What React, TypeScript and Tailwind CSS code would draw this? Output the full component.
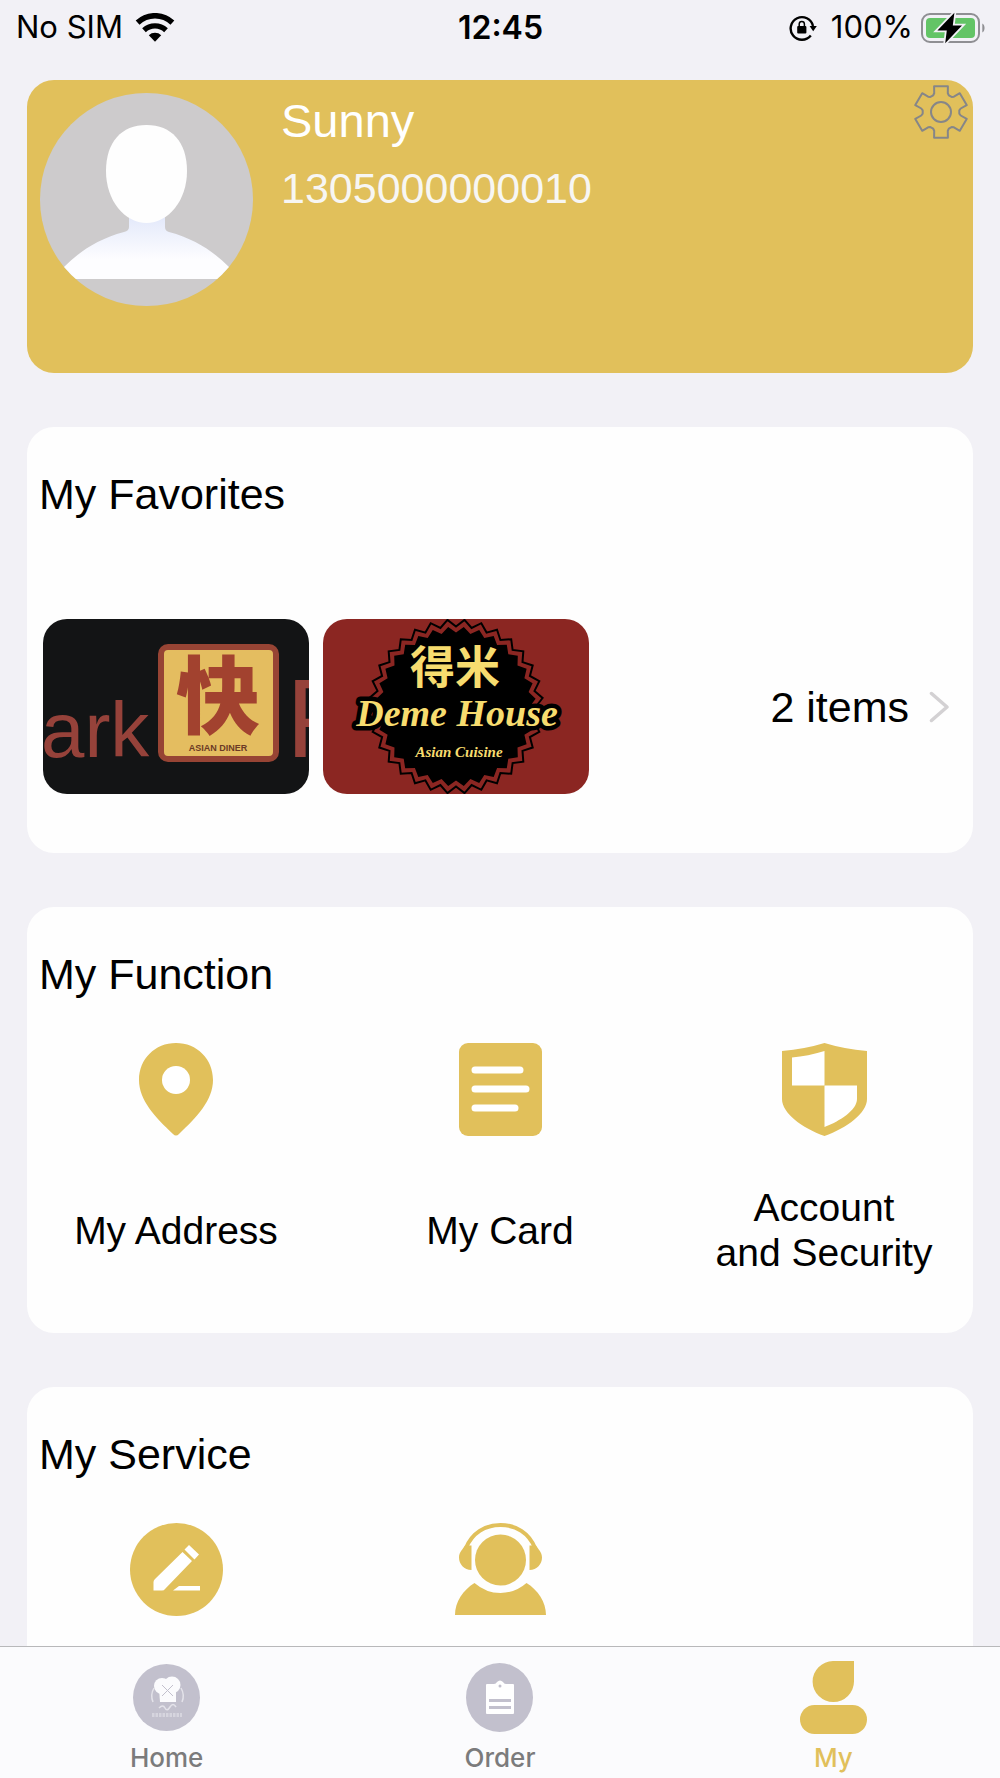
import type { ReactNode } from 'react';

const GOLD = '#e1c05b';

// Points on a circle, repeated once per tooth: [angle offset in degrees, radius]
function ring(cx: number, cy: number, teeth: number, shape: [number, number][]) {
  const points: string[] = [];
  for (let i = 0; i < teeth; i++) {
    for (const [offset, radius] of shape) {
      const angle = (((360 / teeth) * i + offset - 90) * Math.PI) / 180;
      points.push(`${(cx + radius * Math.cos(angle)).toFixed(1)},${(cy + radius * Math.sin(angle)).toFixed(1)}`);
    }
  }
  return points.join(' ');
}

function WifiIcon() {
  return (
    <svg width="40" height="30" viewBox="0 0 40 30" aria-hidden="true">
      <path d="M2.6 9.6a25.5 25.5 0 0 1 34.8 0" fill="none" stroke="#000" strokeWidth="5.6" />
      <path d="M9 17.2a16.2 16.2 0 0 1 22 0" fill="none" stroke="#000" strokeWidth="5.4" />
      <path d="M13.8 22.2a9 9 0 0 1 12.4 0L20 28.8Z" />
    </svg>
  );
}

function RotationLockIcon() {
  return (
    <svg width="28" height="27" viewBox="0 0 28 27" aria-hidden="true">
      <path d="M21.8 21.5a11.3 11.3 0 1 1 2.2-9.5" fill="none" stroke="#000" strokeWidth="2.4" />
      <path d="M20.6 12h7.2l-3.6 5.2Z" />
      <rect x="8.2" y="12" width="9.2" height="7.6" rx="1" />
      <path d="M10.2 12.5V10a2.6 2.6 0 0 1 5.2 0v2.5" fill="none" stroke="#000" strokeWidth="1.5" />
    </svg>
  );
}

function BatteryIcon() {
  return (
    <svg width="64" height="32" viewBox="0 0 64 32" aria-hidden="true">
      <rect x="1" y="2" width="57" height="28" rx="8" fill="none" stroke="#8f8f93" strokeWidth="2" />
      <rect x="5" y="6" width="49" height="20" rx="4" fill="#63c466" />
      <path d="M61.3 11.5c3 1.6 3 7.4 0 9Z" fill="#8f8f93" />
      <path
        d="M33.4.8 16.4 18.4h9.4L24.2 31.2 41 13.6h-9.2Z"
        stroke="#f2f1f6"
        strokeWidth="3.6"
        paintOrder="stroke"
      />
    </svg>
  );
}

function GearIcon() {
  return (
    <svg width="54" height="54" viewBox="0 0 54 54" fill="none" stroke="#868688" strokeWidth="2" strokeLinejoin="round" aria-hidden="true">
      <polygon points={ring(27, 27, 6, [[-20, 20], [-15, 26.6], [15, 26.6], [20, 20], [25, 18.4], [35, 18.4]])} />
      <circle cx="27" cy="27" r="10" />
    </svg>
  );
}

function Avatar() {
  return (
    <svg className="shrink-0" width="213" height="213" viewBox="0 0 213 213" role="img" aria-label="Profile photo">
      <defs>
        <clipPath id="avatar-clip">
          <circle cx="106.5" cy="106.5" r="106.5" />
        </clipPath>
        <linearGradient id="avatar-body" x1="0" y1="0" x2="0" y2="1">
          <stop offset="0" stopColor="#e1e7fa" />
          <stop offset="0.7" stopColor="#fdfdff" />
        </linearGradient>
      </defs>
      <g clipPath="url(#avatar-clip)">
        <rect width="213" height="213" fill="#cdcbcc" />
        <path
          d="M89 120h36v14q0 4 4 5c26 7 44 19 60 35l12 12H12l12-12c16-16 34-28 60-35q5-1 5-5Z"
          fill="url(#avatar-body)"
        />
        <path d="M106.5 32c25 0 40.500 17 40.500 46 0 30-19 52-40.500 52S66 108 66 78c0-29 15.500-46 40.500-46Z" fill="#fefefe" />
      </g>
    </svg>
  );
}

function AsianDinerPhoto() {
  return (
    <svg className="rounded-3xl" width="266" height="175" viewBox="0 0 266 175" role="img" aria-label="Park Asian Diner">
      <rect width="266" height="175" fill="#131415" />
      <g fill="#96423a" fontFamily="'Liberation Sans', sans-serif">
        <text x="-2" y="138" fontSize="78">
          ark
        </text>
        <text x="243" y="138" fontSize="112">
          P
        </text>
      </g>
      <rect x="118" y="28" width="115" height="112" rx="7" fill="#e4bd60" stroke="#974434" strokeWidth="6" />
      <text x="133" y="108" fill="#a2422f" fontFamily="'Noto Sans CJK SC', sans-serif" fontSize="84" fontWeight="900">
        快
      </text>
      <text x="175" y="132" textAnchor="middle" fill="#6b3a26" fontFamily="'Liberation Sans', sans-serif" fontSize="9" fontWeight="700">
        ASIAN DINER
      </text>
    </svg>
  );
}

function DemeHouseLogo() {
  return (
    <svg className="rounded-3xl" width="266" height="175" viewBox="0 0 266 175" role="img" aria-label="Deme House">
      <rect width="266" height="175" fill="#8b2622" />
      <polygon points={ring(133, 87.5, 32, [[0, 80], [5.625, 87]])} fill="none" stroke="#000" strokeWidth="2" />
      <polygon points={ring(133, 87.5, 32, [[0, 74], [5.625, 80]])} />
      <g fill="#f7dc6f" textAnchor="middle">
        <text x="132" y="65" fontFamily="'Noto Sans CJK SC', sans-serif" fontSize="45" fontWeight="700">
          得米
        </text>
        <g fontFamily="'Liberation Serif', serif" fontStyle="italic" fontWeight="700">
          <text x="134" y="107" fontSize="38" stroke="#000" strokeWidth="9" strokeLinejoin="round" paintOrder="stroke">
            Deme House
          </text>
          <text x="136" y="138" fontSize="15">
            Asian Cuisine
          </text>
        </g>
      </g>
    </svg>
  );
}

function PinIcon() {
  return (
    <svg width="74" height="93" viewBox="0 0 74 93" aria-hidden="true">
      <path d="M37 0c21 0 37 16 37 37 0 20-16 37-34 54q-3 3-6 0C16 74 0 57 0 37 0 16 16 0 37 0Z" fill={GOLD} />
      <circle cx="37" cy="37" r="14" fill="#fff" />
    </svg>
  );
}

function CardIcon() {
  return (
    <svg width="83" height="93" viewBox="0 0 83 93" aria-hidden="true">
      <rect width="83" height="93" rx="9" fill={GOLD} />
      <path d="M16 27h45M16 46h51M16 65h40" stroke="#fff" strokeWidth="7" strokeLinecap="round" />
    </svg>
  );
}

function ShieldIcon() {
  return (
    <svg width="85" height="93" viewBox="0 0 85 93" aria-hidden="true">
      <path d="M42.5 0Q62 6 85 8v48c0 14-20 29-42.5 37C20 85 0 70 0 56V8Q23 6 42.5 0Z" fill={GOLD} />
      <path d="M10 14.5Q26 13 42.5 8v34.5H10Z" fill="#fff" />
      <path d="M42.5 42.5H75V56c0 11-17 22-32.5 28Z" fill="#fff" />
    </svg>
  );
}

function EditIcon() {
  return (
    <svg width="93" height="93" viewBox="0 0 93 93" aria-hidden="true">
      <circle cx="46.5" cy="46.5" r="46.5" fill={GOLD} />
      <path
        d="M52.5 29 62 38 35 66Q34 67.5 32 67.5H23.5V59Q23.5 57.5 25 56ZM59 22 69 31.5 64.5 36.5 54.5 26.5ZM49 63H70V67.5H43Z"
        fill="#fff"
      />
    </svg>
  );
}

function SupportIcon() {
  return (
    <svg width="91" height="93" viewBox="0 0 91 93" aria-hidden="true">
      <g fill={GOLD}>
        <circle cx="45.5" cy="37" r="25.5" />
        <path d="M16.5 22.5V47C9 47 4 41 4 34.5 4 29 8 26 10 22.5Z" />
        <path d="M74.5 22.5V47C82 47 87 41 87 34.5 87 29 83 26 81 22.5Z" />
        <path d="M19.5 60Q31 70 45.5 70T71.5 60C83 67 91 79 91 92H0C0 79 8 67 19.5 60Z" />
      </g>
      <path d="M11 25C17 10 30 2 45.5 2S74 10 80 25" fill="none" stroke={GOLD} strokeWidth="4" />
    </svg>
  );
}

function HomeTabIcon() {
  return (
    <svg width="67" height="72" viewBox="0 0 67 72" aria-hidden="true">
      <circle cx="33.5" cy="36.5" r="33.5" fill="#c2c0cd" />
      <g fill="#fbfbfd">
        <circle cx="29" cy="25" r="8" />
        <circle cx="39" cy="24" r="8.5" />
        <path d="M26 27h17v14H27Z" />
      </g>
      <path d="m29 24 11 11m0-11L29 35" stroke="#c2c0cd" strokeWidth="1" />
      <path d="M21 27q-4 7-1 14M48 27q4 7 1 14M26 47q4-4 6 0t5-1 6 0" fill="none" stroke="#e4e3ea" strokeWidth="1.5" />
      <path d="M19 54h30" stroke="#d6d5de" strokeWidth="4" strokeDasharray="2.5 1" />
    </svg>
  );
}

function OrderTabIcon() {
  return (
    <svg width="67" height="72" viewBox="0 0 67 72" aria-hidden="true">
      <ellipse cx="33.5" cy="36.5" rx="33.5" ry="34.5" fill="#c2c0cd" />
      <path d="M21 23h7q2 0 3-2 3-3 6 0 1 2 3 2h7q1 0 1 1v28q0 1-1 1H21q-1 0-1-1V24q0-1 1-1Z" fill="#fff" />
      <circle cx="34" cy="25" r="1.5" fill="#c2c0cd" />
      <path d="M23 39.5h22M23 46.5h22" stroke="#c2c0cd" strokeWidth="3" />
    </svg>
  );
}

function MyTabIcon() {
  return (
    <svg width="67" height="73" viewBox="0 0 67 73" fill={GOLD} aria-hidden="true">
      <path d="M33 0h21v20.5A20.7 20.5 0 1 1 33 0Z" />
      <rect y="44" width="67" height="29" rx="14.5" />
    </svg>
  );
}

const functions = [
  { label: 'My Address', icon: <PinIcon /> },
  { label: 'My Card', icon: <CardIcon /> },
  { label: 'Account\nand Security', icon: <ShieldIcon /> },
];

const services = [
  { label: 'Feedback', icon: <EditIcon /> },
  { label: 'Customer service', icon: <SupportIcon /> },
];

const tabs = [
  { label: 'Home', icon: <HomeTabIcon />, active: false },
  { label: 'Order', icon: <OrderTabIcon />, active: false },
  { label: 'My', icon: <MyTabIcon />, active: true },
];

function StatusBar() {
  return (
    <header className="grid h-[55px] shrink-0 grid-cols-3 items-center pr-[15px] pl-4 font-['Inter',sans-serif] text-[31px]">
      <div className="flex items-center gap-3">
        <span>No SIM</span>
        <WifiIcon />
      </div>
      <time className="text-center text-[32px] font-semibold">12:45</time>
      <div className="flex items-center justify-end">
        <RotationLockIcon />
        <span className="mr-2 ml-3.5">100%</span>
        <BatteryIcon />
      </div>
    </header>
  );
}

function Card({ title, children }: { title: string; children: ReactNode }) {
  return (
    <section className="shrink-0 rounded-[27px] bg-[#fefefe] pt-10">
      <h2 className="px-3 text-[43px] leading-[54px]">{title}</h2>
      {children}
    </section>
  );
}

export default function App() {
  return (
    <div className="flex h-screen flex-col bg-[#f2f1f6] font-['Liberation_Sans',sans-serif] text-black">
      <StatusBar />

      <main className="flex min-h-0 flex-1 flex-col gap-[54px] overflow-y-auto px-[27px] pt-[25px] [scrollbar-width:none]">
        <section className="relative flex shrink-0 gap-7 rounded-[27px] bg-[#e1c05b] px-[13px] pt-[13px] pb-[67px]">
          <Avatar />
          <div className="flex flex-col gap-3">
            <h1 className="text-[47px] leading-[56px] text-white">Sunny</h1>
            <p className="text-[43px] leading-[54px] text-[#f7f6f3]">1305000000010</p>
          </div>
          <button type="button" aria-label="Settings" className="absolute top-[5px] right-[5px]">
            <GearIcon />
          </button>
        </section>

        <Card title="My Favorites">
          <div className="mt-[98px] flex items-center gap-3.5 pr-6 pb-[59px] pl-4">
            <AsianDinerPhoto />
            <DemeHouseLogo />
            <button type="button" className="ml-auto flex items-center gap-5 text-[43px] leading-[54px]">
              2 items
              <svg width="20" height="32" viewBox="0 0 20 32" fill="none" stroke="#d3d1d3" strokeWidth="3.5" strokeLinecap="round" strokeLinejoin="round" aria-hidden="true">
                <path d="m2.5 2.5 15.5 13.5-15.5 13.5" />
              </svg>
            </button>
          </div>
        </Card>

        <Card title="My Function">
          <div className="mt-[42px] grid grid-cols-3 gap-[26px] pb-[58px]">
            {functions.map((item) => (
              <button key={item.label} type="button" className="flex flex-col items-center gap-[49px]">
                {item.icon}
                <span className="flex h-[90px] items-center text-center text-[39px] leading-[45px] whitespace-pre-line">
                  {item.label}
                </span>
              </button>
            ))}
          </div>
        </Card>

        <Card title="My Service">
          <div className="mt-[42px] grid grid-cols-3 gap-[26px] pb-[58px]">
            {services.map((item) => (
              <button key={item.label} type="button" aria-label={item.label} className="flex justify-center">
                {item.icon}
              </button>
            ))}
          </div>
        </Card>
      </main>

      <nav className="grid shrink-0 grid-cols-3 border-t border-[#b8b8ba] bg-[#fbfbfd] pt-3.5 pb-1 font-['Inter',sans-serif]">
        {tabs.map((tab) => (
          <button
            key={tab.label}
            type="button"
            aria-current={tab.active ? 'page' : undefined}
            className={`flex flex-col items-center text-[26px] leading-8 font-medium ${tab.active ? 'text-[#e1c05b]' : 'text-[#7b7b7c]'}`}
          >
            <span className="mb-2 flex h-[73px] items-start">{tab.icon}</span>
            {tab.label}
          </button>
        ))}
      </nav>
    </div>
  );
}
